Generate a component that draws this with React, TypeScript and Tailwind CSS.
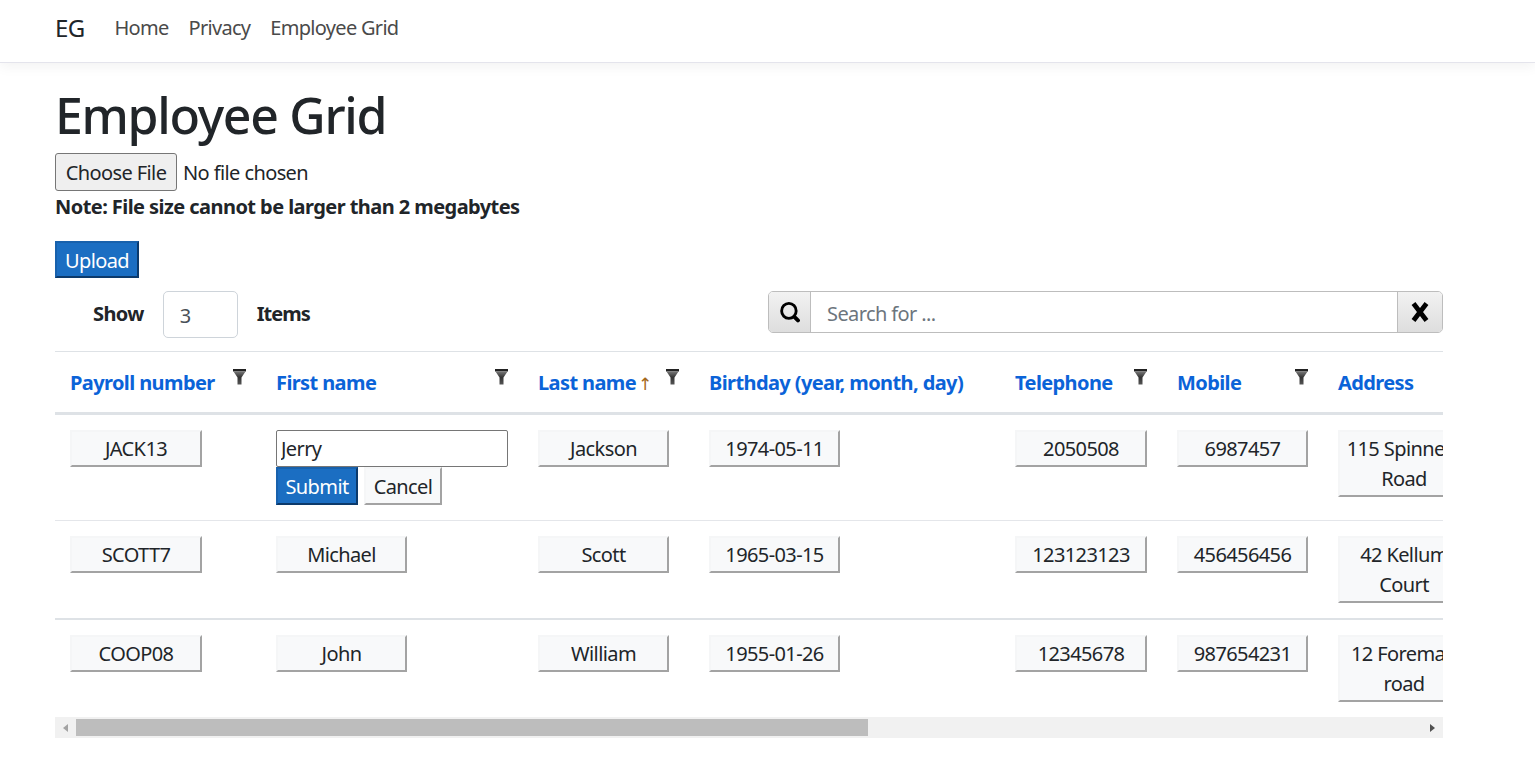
const outset = "border-2 border-[#f5f6f7] border-r-[#a3a3a3] border-b-[#a3a3a3]";
const primary = "border-2 border-[#1861ac] border-r-[#0c3a6b] border-b-[#0c3a6b] bg-[#1b6ec2] text-white";

function Funnel() {
  return (
    <svg width="13" height="16" viewBox="0 0 13 16" className="absolute top-[17px] right-[15px]">
      <defs>
        <linearGradient id="funnel" x1="0" y1="0" x2="0" y2="1">
          <stop offset="0" stopColor="#777" />
          <stop offset="0.45" stopColor="#333" />
          <stop offset="1" stopColor="#555" />
        </linearGradient>
      </defs>
      <rect x="0" y="0" width="13" height="2.5" fill="#222" />
      <path d="M0.5 2.5h12L8.5 8.5V15.5h-4V8.5z" fill="url(#funnel)" />
    </svg>
  );
}

function SearchIcon() {
  return (
    <svg width="22" height="22" viewBox="0 0 20 20" fill="none" stroke="#000" strokeLinecap="round">
      <ellipse cx="9" cy="9" rx="6.6" ry="6.8" strokeWidth="2.6" />
      <path d="M14 14.5l3.2 3.2" strokeWidth="3.6" />
    </svg>
  );
}

function ClearIcon() {
  return (
    <svg width="18" height="20" viewBox="0 0 18 20" fill="none" stroke="#000" strokeWidth="4.8">
      <path d="M2.5 1.5l13 17M15.5 1.5l-13 17" />
    </svg>
  );
}

const columns = [
  { label: "Payroll number", filter: true, cell: "w-[132px]" },
  { label: "First name", filter: true, cell: "w-[131px]" },
  { label: "Last name", filter: true, sorted: true, cell: "w-[131px]" },
  { label: "Birthday (year, month, day)", filter: false, cell: "w-[131px]" },
  { label: "Telephone", filter: true, cell: "w-[132px]" },
  { label: "Mobile", filter: true, cell: "w-[131px]" },
  { label: "Address", filter: false, cell: "w-[132px]" },
];

const rows = [
  { border: "border-b border-[#e4e6ea]", cells: ["JACK13", "Jerry", "Jackson", "1974-05-11", "2050508", "6987457", "115 Spinners Road"] },
  { border: "border-b-2 border-[#dee2e6]", cells: ["SCOTT7", "Michael", "Scott", "1965-03-15", "123123123", "456456456", "42 Kellum Court"] },
  { border: "", cells: ["COOP08", "John", "William", "1955-01-26", "12345678", "987654231", "12 Foreman road"] },
];

export default function App() {
  return (
    <div className="min-h-[780px] bg-white font-['Noto_Sans',sans-serif] text-[20px] leading-[30px] tracking-[-0.03em] text-[#212529]">
      <nav className="flex h-[63px] items-center border-b border-[#e4e4ec] bg-white pb-[6px] pl-[55px] tracking-[-0.035em] shadow-[0_4px_12px_rgba(0,0,0,0.05)]">
        <a className="mr-[30px] text-[24px] text-[#212529]">EG</a>
        <a className="mr-[20px] text-[#4a4a4a]">Home</a>
        <a className="mr-[20px] text-[#4a4a4a]">Privacy</a>
        <a className="text-[#4a4a4a]">Employee Grid</a>
      </nav>

      <main className="px-[55px] pt-[22px] pr-[92px]">
        <h1 className="mb-[8px] text-[50px] font-medium leading-[60px] tracking-[-0.026em]">Employee Grid</h1>

        <div className="mb-[1px] flex items-center">
          <button className="h-[38px] w-[122px] rounded-[3px] border border-[#767676] bg-[#efefef] pt-[2px] text-center">Choose File</button>
          <span className="ml-[6px] pt-[2px]">No file chosen</span>
        </div>
        <p className="font-bold tracking-[-0.028em]">Note: File size cannot be larger than 2 megabytes</p>

        <button className={`mt-[19px] block h-[37px] w-[84px] pt-[3px] ${primary}`}>Upload</button>

        <div className="mt-[13px] flex items-start justify-between">
          <div className="flex items-center pl-[38px]">
            <label className="pb-[2px] font-bold">Show</label>
            <input
              readOnly
              value="3"
              className="mx-[19px] h-[47px] w-[75px] rounded-[5px] border border-[#ced4da] pt-[2px] pl-[16px] text-[#495057] outline-none"
            />
            <label className="pb-[2px] font-bold tracking-[-0.05em]">Items</label>
          </div>
          <div className="flex h-[42px] w-[675px] overflow-hidden rounded-[5px] border border-[#bdbdbd]">
            <span className="flex w-[42px] items-center justify-center border-r border-[#bdbdbd] bg-gradient-to-b from-[#f2f2f2] to-[#dedede]">
              <SearchIcon />
            </span>
            <input placeholder="Search for ..." className="min-w-0 flex-1 px-[16px] pt-[4px] outline-none placeholder:text-[#6c757d]" />
            <span className="flex w-[45px] items-center justify-center border-l border-[#bdbdbd] bg-gradient-to-b from-[#f2f2f2] to-[#dedede]">
              <ClearIcon />
            </span>
          </div>
        </div>

        <div className="mt-[13px] overflow-hidden">
          <table className="w-[1468px] table-fixed border-collapse">
            <colgroup>
              <col className="w-[206px]" />
              <col className="w-[262px]" />
              <col className="w-[171px]" />
              <col className="w-[306px]" />
              <col className="w-[162px]" />
              <col className="w-[161px]" />
              <col className="w-[200px]" />
            </colgroup>
            <thead>
              <tr className="h-[62px] border-t border-b-[3px] border-t-[#dee2e6] border-b-[#dee2e6]">
                {columns.map((col) => (
                  <th key={col.label} className="relative px-[15px] pt-[2px] text-left align-middle font-bold text-[#0b63d8]">
                    {col.label}
                    {col.sorted && <span className="ml-[2px] font-['DejaVu_Sans',sans-serif] text-[17px] font-normal text-[#a5691c]">↑</span>}
                    {col.filter && <Funnel />}
                  </th>
                ))}
              </tr>
            </thead>
            <tbody>
              {rows.map((row, rowIndex) => (
                <tr key={row.cells[0]} className={row.border}>
                  {row.cells.map((value, i) => (
                    <td key={i} className="p-[15px] align-top">
                      {rowIndex === 0 && i === 1 ? (
                        <div>
                          <input
                            readOnly
                            value={value}
                            className="block h-[37px] w-[232px] rounded-[2px] border border-[#767676] px-[4px] outline-none"
                          />
                          <div className="flex gap-[6px]">
                            <button className={`h-[38px] w-[82px] pt-[2px] ${primary}`}>Submit</button>
                            <button className={`h-[38px] w-[78px] pt-[2px] ${outset} bg-[#f8f9fa]`}>Cancel</button>
                          </div>
                        </div>
                      ) : (
                        <button className={`block ${columns[i].cell} ${outset} bg-[#f8f9fa] px-[6px] py-[1.5px] text-center text-[#212529]`}>
                          {value}
                        </button>
                      )}
                    </td>
                  ))}
                </tr>
              ))}
            </tbody>
          </table>
        </div>

        <div className="flex h-[21px] items-center bg-[#f1f1f1]">
          <span className="flex w-[21px] justify-center">
            <span className="h-0 w-0 border-y-[4px] border-r-[5px] border-y-transparent border-r-[#a3a3a3]" />
          </span>
          <div className="h-[17px] w-[792px] bg-[#bdbdbd]" />
          <span className="ml-auto flex w-[21px] justify-center">
            <span className="h-0 w-0 border-y-[4px] border-l-[5px] border-y-transparent border-l-[#505050]" />
          </span>
        </div>
      </main>
    </div>
  );
}
